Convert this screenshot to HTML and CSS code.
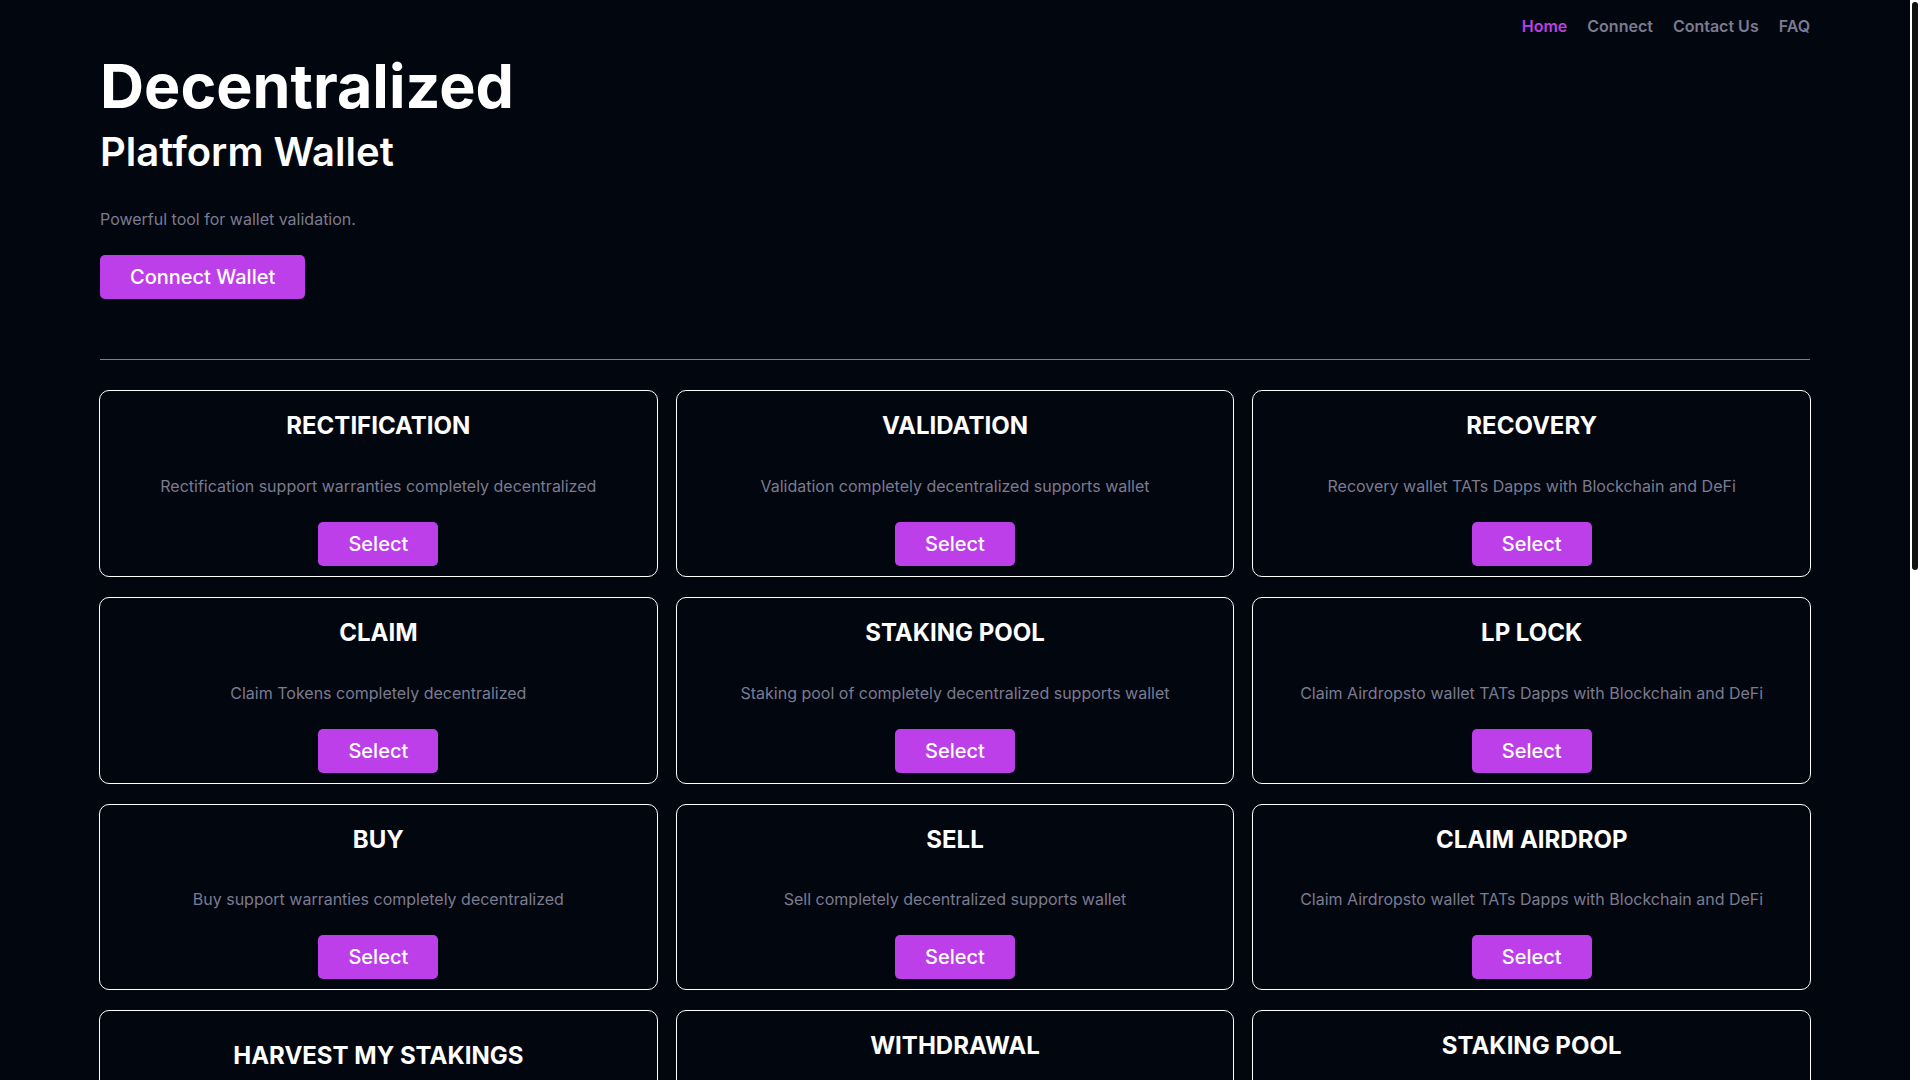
FILE: index.html
```html
<!DOCTYPE html>
<html lang="en">
<head>
    <meta charset="UTF-8">
    <meta name="viewport" content="width=device-width, initial-scale=1.0">
    <title>Decentralized Platform Wallet</title>
    <link rel="stylesheet" href="styles.css">
</head>
<body>
    <div class="page">
        <nav class="navbar">
            <a href="#" class="active">Home</a>
            <a href="#connect">Connect</a>
            <a href="#contact">Contact Us</a>
            <a href="#faq">FAQ</a>
        </nav>

        <header class="hero">
            <h1>Decentralized</h1>
            <h2>Platform Wallet</h2>
            <p>Powerful tool for wallet validation.</p>
            <button type="button" class="btn">Connect Wallet</button>
        </header>

        <main class="cards" id="connect">
            <div class="card">
                <h3>RECTIFICATION</h3>
                <p>Rectification support warranties completely decentralized</p>
                <button type="button" class="btn">Select</button>
            </div>
            <div class="card">
                <h3>VALIDATION</h3>
                <p>Validation completely decentralized supports wallet</p>
                <button type="button" class="btn">Select</button>
            </div>
            <div class="card">
                <h3>RECOVERY</h3>
                <p>Recovery wallet TATs Dapps with Blockchain and DeFi</p>
                <button type="button" class="btn">Select</button>
            </div>
            <div class="card">
                <h3>CLAIM</h3>
                <p>Claim Tokens completely decentralized</p>
                <button type="button" class="btn">Select</button>
            </div>
            <div class="card">
                <h3>STAKING POOL</h3>
                <p>Staking pool of completely decentralized supports wallet</p>
                <button type="button" class="btn">Select</button>
            </div>
            <div class="card">
                <h3>LP LOCK</h3>
                <p>Claim Airdropsto wallet TATs Dapps with Blockchain and DeFi</p>
                <button type="button" class="btn">Select</button>
            </div>
            <div class="card">
                <h3>BUY</h3>
                <p>Buy support warranties completely decentralized</p>
                <button type="button" class="btn">Select</button>
            </div>
            <div class="card">
                <h3>SELL</h3>
                <p>Sell completely decentralized supports wallet</p>
                <button type="button" class="btn">Select</button>
            </div>
            <div class="card">
                <h3>CLAIM AIRDROP</h3>
                <p>Claim Airdropsto wallet TATs Dapps with Blockchain and DeFi</p>
                <button type="button" class="btn">Select</button>
            </div>
            <div class="card card-low">
                <h3>HARVEST MY STAKINGS</h3>
            </div>
            <div class="card">
                <h3>WITHDRAWAL</h3>
            </div>
            <div class="card">
                <h3>STAKING POOL</h3>
            </div>
        </main>
    </div>

    <div class="scrollbar">
        <div class="thumb"></div>
    </div>
</body>
</html>
```
FILE: styles.css
```css
* {
    margin: 0;
    padding: 0;
    box-sizing: border-box;
}

body {
    display: flex;
    height: 100vh;
    overflow: hidden;
    font-family: Inter, sans-serif;
    font-size: 16px;
    color: #fff;
    background-color: #02060f;
}

.page {
    flex: 1;
    padding: 0 100px;
}

/* Navigation */
.navbar {
    display: flex;
    justify-content: flex-end;
    gap: 20px;
    padding-top: 14px;
}

.navbar a {
    font-weight: 600;
    line-height: 24px;
    color: #7b7b8f;
    text-decoration: none;
}

.navbar a.active {
    color: #bd3fe9;
}

/* Hero */
.hero {
    padding: 12px 0 60px;
    border-bottom: 1px solid #7d8080;
}

.hero h1 {
    font-size: 61px;
    font-weight: 700;
    line-height: 72px;
}

.hero h2 {
    font-size: 40px;
    font-weight: 600;
    line-height: 48px;
    margin-top: 6px;
}

p {
    line-height: 24px;
    color: #7b7b8f;
}

.hero p {
    margin: 31px 0 24px;
}

.btn {
    display: inline-block;
    padding: 10px 30px;
    font-family: inherit;
    font-size: 20px;
    font-weight: 500;
    line-height: 24px;
    color: #fff;
    background-color: #bd3fe9;
    border: none;
    border-radius: 5px;
    cursor: pointer;
}

/* Cards */
.cards {
    display: grid;
    grid-template-columns: repeat(3, 1fr);
    gap: 20px 18px;
    margin: 30px -1px 0;
}

.card {
    min-height: 186px;
    padding: 21px 10px 10px;
    text-align: center;
    border: 1px solid #fff;
    border-radius: 10px;
}

.card-low {
    padding-top: 31px;
}

.card h3 {
    font-size: 24px;
    font-weight: 700;
    line-height: 1.2;
}

.card p {
    margin: 33px 0 24px;
}

/* Scroll track on the right edge */
.scrollbar {
    width: 10px;
    padding: 2px;
    background-color: #fff;
}

.thumb {
    height: 568px;
    border-radius: 3px;
    background-color: #111;
}
```
